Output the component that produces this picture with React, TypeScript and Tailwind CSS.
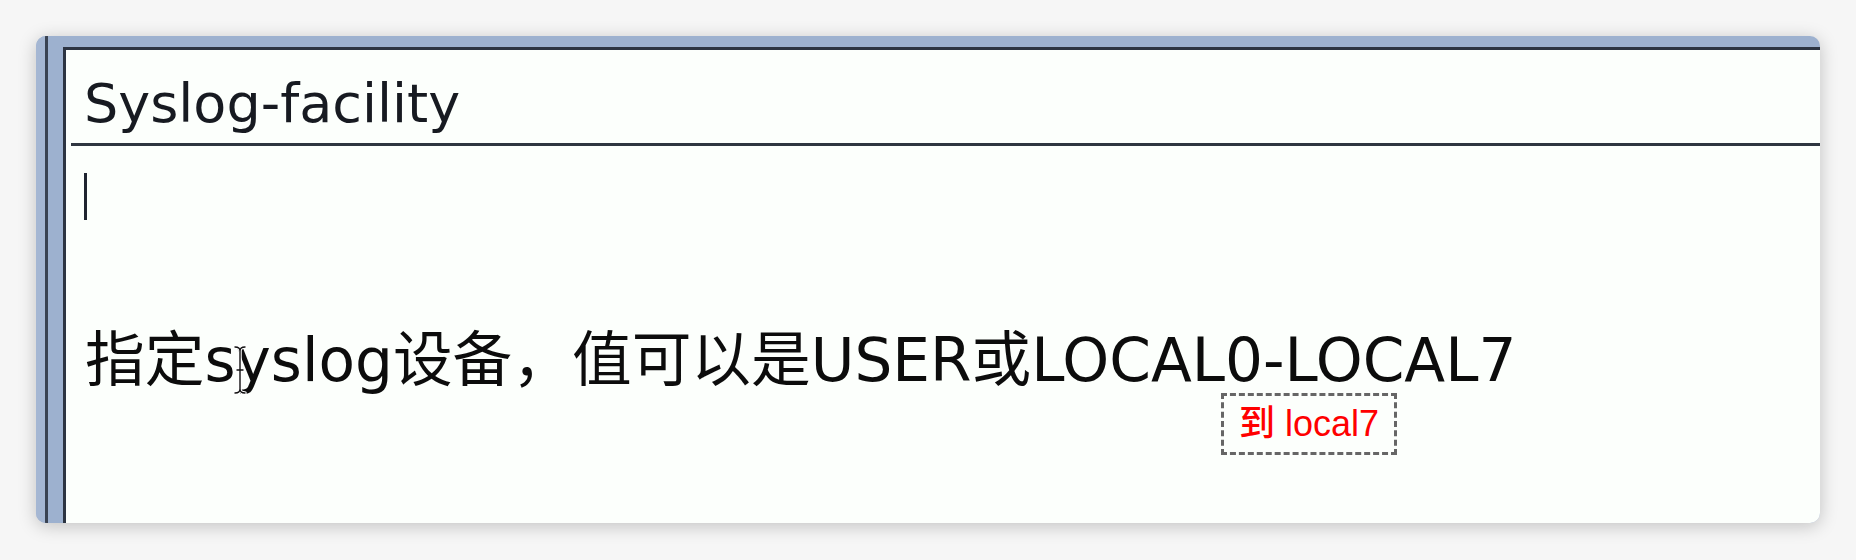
const dejavu = { fontFamily: '"DejaVu Sans", "Noto Sans CJK SC", sans-serif' }

const IBeam = () => (
  <svg
    width="14"
    height="50"
    viewBox="0 0 14 50"
    className="pointer-events-none absolute left-[167px] top-[14px]"
  >
    <g fill="none" strokeLinecap="round">
      <path
        d="M2 2 Q7 2 7 6 Q7 2 12 2 M7 6 V44 M2 48 Q7 48 7 44 Q7 48 12 48 M4 25 H10"
        stroke="#fff"
        strokeWidth="3.5"
      />
      <path
        d="M2 2 Q7 2 7 6 Q7 2 12 2 M7 6 V44 M2 48 Q7 48 7 44 Q7 48 12 48 M4 25 H10"
        stroke="#111"
        strokeWidth="1.4"
      />
    </g>
  </svg>
)

export default function App() {
  return (
    <div className="h-[560px] w-[1856px] bg-[#f6f6f6] pt-[36px] pl-[36px]">
      <div className="flex h-[487px] w-[1784px] overflow-hidden rounded-[10px] bg-[#9db1cf] shadow-[0_3px_18px_rgba(0,0,0,0.22)]">
        {/* left frame strip */}
        <div className="w-[9px] bg-[#a5b7d3]" />
        <div className="w-[3px] bg-[#3a4352]" />
        <div className="w-[15px]" />

        <div className="flex flex-1 flex-col pt-[11px]">
          <div className="flex-1 border-t-[3px] border-l-[3px] border-[#2c3442] bg-[#fcfffc]">
            <h1
              className="pt-[27px] pl-[18px] text-[54px] leading-none text-[#171a21]"
              style={dejavu}
            >
              Syslog-facility
            </h1>
            <div className="mt-[12px] ml-[5px] h-[3px] bg-[#2f3640]" />

            <div className="mt-[27px] ml-[18px] h-[47px] w-[3px] bg-[#1f2430]" />

            <div className="relative mt-[111px] pl-[19px]">
              <p
                className="text-[59.7px] leading-none whitespace-nowrap text-[#0c0c0c]"
                style={dejavu}
              >
                指定syslog设备，值可以是USER或LOCAL0-LOCAL7
              </p>
              <IBeam />
            </div>

            <div
              className="mt-[2px] ml-[1155px] flex h-[62px] w-[176px] items-center border-[3px] border-dashed border-[#666] pl-[15px] text-[36px] font-medium text-[#ff0000]"
              style={{
                fontFamily: '"Liberation Sans", "Noto Sans CJK SC", sans-serif',
              }}
            >
              到 local7
            </div>
          </div>
        </div>
      </div>
    </div>
  )
}
